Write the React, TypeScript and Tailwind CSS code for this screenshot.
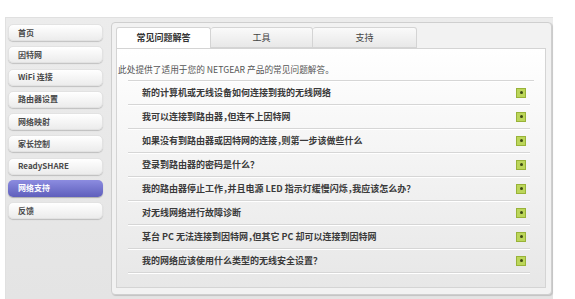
import React from "react";

const nav = ["首页", "因特网", "WiFi 连接", "路由器设置", "网络映射", "家长控制", "ReadySHARE", "网络支持", "反馈"];
const faqs = [
  "新的计算机或无线设备如何连接到我的无线网络",
  "我可以连接到路由器，但连不上因特网",
  "如果没有到路由器或因特网的连接，则第一步该做些什么",
  "登录到路由器的密码是什么？",
  "我的路由器停止工作，并且电源 LED 指示灯缓慢闪烁，我应该怎么办？",
  "对无线网络进行故障诊断",
  "某台 PC 无法连接到因特网，但其它 PC 却可以连接到因特网",
  "我的网络应该使用什么类型的无线安全设置？",
];

const font = { fontFamily: '"Noto Sans CJK SC", "Noto Sans", sans-serif' };

export default function App() {
  return (
    <div className="w-[575px] h-[299px] bg-white pt-[17px] pl-[5px] overflow-hidden [font-feature-settings:'halt']" style={font}>
      <div className="w-[548px] h-[282px] flex bg-gradient-to-b from-[#ececec] to-[#e4e4e4] border-l border-t border-[#e0e0e0]">
        <div className="w-[105px] shrink-0 pt-[6px] pl-[2px] flex flex-col gap-[5.25px]">
          {nav.map((n, i) => (
            <div
              key={n}
              className={
                i === 7
                  ? "w-[95px] h-[17px] rounded-[5px] bg-gradient-to-b from-[#8c8ce0] to-[#5f5fbc] shadow-[0_1px_1px_rgba(0,0,0,0.25)] flex items-center pl-[10px] text-[8px] font-bold text-white"
                  : "w-[95px] h-[17px] rounded-[5px] bg-gradient-to-b from-white to-[#ececec] border border-[#e2e2e2] shadow-[0_1px_1px_rgba(0,0,0,0.18)] flex items-center pl-[9px] text-[8px] font-bold text-[#4a4a4a]"
              }
            >
              {n}
            </div>
          ))}
        </div>
        <div className="mt-[4px] w-[441px] h-[273px] rounded-[4px] border border-[#cfcfcf] bg-[#f2f2f2] shadow-[1px_1px_1px_rgba(0,0,0,0.15)] pl-[4px] pt-[4px] flex flex-col">
          <div className="flex h-[21px] text-[9px] text-[#444]">
            <div className="w-[95px] h-[21px] bg-white border border-[#d4d4d4] border-b-0 rounded-t-[3px] flex items-center justify-center font-bold text-[#333]">常见问题解答</div>
            <div className="w-[102px] h-[21px] bg-gradient-to-b from-[#fafafa] to-[#e8e8e8] border border-[#d4d4d4] border-l-0 rounded-t-[3px] flex items-center justify-center">工具</div>
            <div className="w-[104px] h-[21px] bg-gradient-to-b from-[#fafafa] to-[#e8e8e8] border border-[#d4d4d4] border-l-0 rounded-t-[3px] flex items-center justify-center">支持</div>
          </div>
          <div className="w-[430px] h-[240px] border border-[#d4d4d4] bg-gradient-to-b from-white via-[#f3f3f3] to-[#e7e7e7]">
            <div className="pt-[15px] pl-[1px] h-[31px] text-[8.7px] text-[#555] leading-[12px]">
              此处提供了适用于您的 NETGEAR 产品的常见问题解答。
            </div>
            <div className="ml-[11px] w-[406px] border-b border-[#d6d6d6] shadow-[0_1px_0_#ffffff]" />
            {faqs.map((f) => (
              <div key={f} className="ml-[11px] w-[402px] h-[24px] border-b border-[#d6d6d6] shadow-[0_1px_0_#ffffff] flex items-center justify-between pl-[14px] pr-[4px]">
                <span className="text-[9px] font-bold text-[#3a3a3a]">{f}</span>
                <span className="w-[10px] h-[10px] bg-[#bcd65a] border border-[#98b238] flex items-center justify-center">
                  <span className="w-[3px] h-[3px] rounded-full bg-[#3d4a14]" />
                </span>
              </div>
            ))}
          </div>
        </div>
      </div>
    </div>
  );
}
